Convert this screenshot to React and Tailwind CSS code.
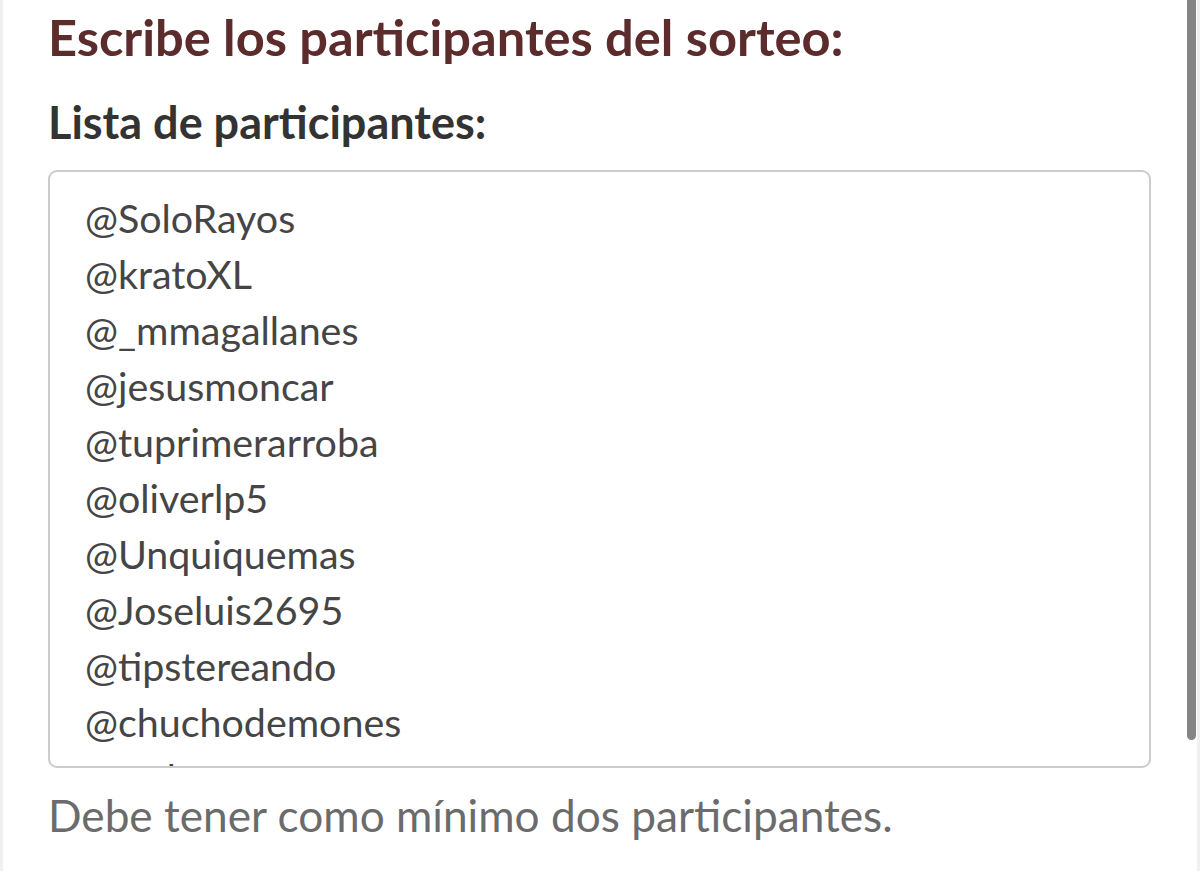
export default function App() {
  const names = [
    "@SoloRayos",
    "@kratoXL",
    "@_mmagallanes",
    "@jesusmoncar",
    "@tuprimerarroba",
    "@oliverlp5",
    "@Unquiquemas",
    "@Joseluis2695",
    "@tipstereando",
    "@chuchodemones",
    "@rodenas",
  ];
  return (
    <div className="w-[1200px] h-[871px] bg-white flex overflow-hidden" style={{ fontFamily: "Lato, 'Open Sans', sans-serif" }}>
      <div className="w-[3px] bg-[#f0f0f0]" />
      <div className="flex-1 pl-[45px] pr-[29px] flex flex-col">
        <h1 className="text-[50.6px] font-bold text-[#5c2b2b] leading-[60px] mt-[7px] whitespace-nowrap">Escribe los participantes del sorteo:</h1>
        <h2 className="text-[45px] font-bold text-[#333333] leading-[54px] mt-[28px] whitespace-nowrap">Lista de participantes:</h2>
        <div className="mt-[21px] h-[598px] border-2 border-[#cccccc] rounded-[9px] overflow-hidden pl-[35px] pt-[18px] shrink-0">
          {names.map((n) => (
            <div key={n} className="text-[39.4px] leading-[56px] text-[#454545] whitespace-nowrap">{n}</div>
          ))}
        </div>
        <p className="text-[44.2px] text-[#6b6b6b] leading-[54px] mt-[20px] whitespace-nowrap">Debe tener como mínimo dos participantes.</p>
      </div>
      <div className="w-[17px] flex">
        <div className="w-[9px] ml-[7px] h-[740px] bg-[#858585] rounded-b-full" />
      </div>
      <div className="w-[3px] bg-[#f0f0f0]" />
    </div>
  );
}
